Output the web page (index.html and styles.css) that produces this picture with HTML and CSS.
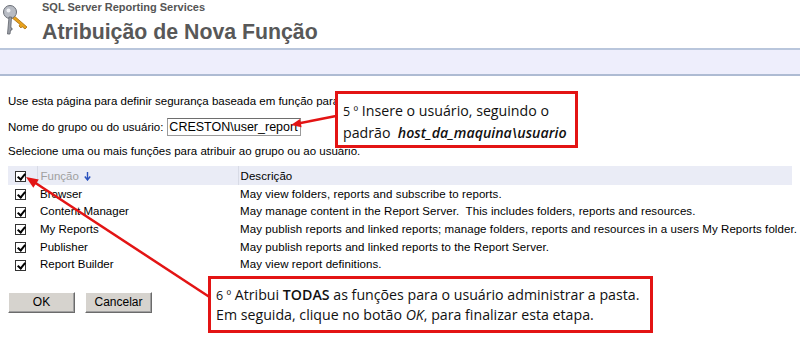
FILE: index.html
```html
<!DOCTYPE html>
<html lang="pt">
<head>
    <meta charset="UTF-8">
    <title>Atribuição de Nova Função</title>
    <link rel="stylesheet" href="styles.css">
</head>
<body>
    <div class="page">
        <div class="header">
            <svg class="logo" width="32" height="36" viewBox="0 0 32 36">
                <!-- gold key -->
                <path d="M12 13 L27 26 L25 28 L22 25.5 L21 27 L19 25 L20 23.5 L11 16 Z" fill="#e8a21c" stroke="#a86d10" stroke-width="0.8"/>
                <!-- grey key -->
                <circle cx="10" cy="11" r="6.5" fill="#b8bcc4" stroke="#6a6e76" stroke-width="1"/>
                <circle cx="8.5" cy="9.5" r="2" fill="#eef0f4"/>
                <path d="M9 16 L7.5 33 L10 33 L10.5 29 L12 29 L12 27 L10.8 27 L11.5 16 Z" fill="#9ca0a8" stroke="#5e626a" stroke-width="0.8"/>
            </svg>
            <div class="titles">
                <div class="product">SQL Server Reporting Services</div>
                <h1>Atribuição de Nova Função</h1>
            </div>
        </div>
        <div class="band"></div>

        <div class="content">
            <p class="intro">Use esta página para definir segurança baseada em função para</p>
            <div class="user-row">
                <label for="userName">Nome do grupo ou do usuário:</label>
                <input type="text" id="userName" value="CRESTON\user_report">
            </div>
            <p class="select-text">Selecione uma ou mais funções para atribuir ao grupo ou ao usuário.</p>

            <table class="roles">
                <colgroup>
                    <col class="w-check">
                    <col class="w-name">
                    <col>
                </colgroup>
                <thead>
                    <tr>
                        <th class="col-check"><span class="chk"></span></th>
                        <th class="col-name">Função
                            <svg class="sort" width="7" height="9" viewBox="0 0 7 9">
                                <path d="M3.5 0 V7 M0.8 4.5 L3.5 8 L6.2 4.5" fill="none" stroke="#2a52be" stroke-width="1.4"/>
                            </svg>
                        </th>
                        <th class="col-desc">Descrição</th>
                    </tr>
                </thead>
                <tbody>
                    <tr>
                        <td class="col-check"><span class="chk"></span></td>
                        <td>Browser</td>
                        <td class="col-desc">May view folders, reports and subscribe to reports.</td>
                    </tr>
                    <tr>
                        <td class="col-check"><span class="chk"></span></td>
                        <td>Content Manager</td>
                        <td class="col-desc">May manage content in the Report Server.&nbsp; This includes folders, reports and resources.</td>
                    </tr>
                    <tr>
                        <td class="col-check"><span class="chk"></span></td>
                        <td>My Reports</td>
                        <td class="col-desc">May publish reports and linked reports; manage folders, reports and resources in a users My Reports folder.</td>
                    </tr>
                    <tr>
                        <td class="col-check"><span class="chk"></span></td>
                        <td>Publisher</td>
                        <td class="col-desc">May publish reports and linked reports to the Report Server.</td>
                    </tr>
                    <tr>
                        <td class="col-check"><span class="chk"></span></td>
                        <td>Report Builder</td>
                        <td class="col-desc">May view report definitions.</td>
                    </tr>
                </tbody>
            </table>

            <div class="buttons">
                <button class="btn">OK</button>
                <button class="btn">Cancelar</button>
            </div>
        </div>

        <!-- annotations drawn over the screenshot -->
        <svg class="arrows" width="800" height="342" viewBox="0 0 800 342">
            <line x1="336" y1="116" x2="298" y2="123.6" stroke="#e31414" stroke-width="2.5"/>
            <polygon points="291,125 301.6,127.2 300,119" fill="#e31414"/>
            <line x1="211" y1="298" x2="34" y2="182" stroke="#e31414" stroke-width="2.5"/>
            <polygon points="26,177 38.8,179.4 33.3,187.8" fill="#e31414"/>
        </svg>
        <div class="callout callout-user">
            <span class="num">5 º</span> Insere o usuário, seguindo o<br>
            padrão&nbsp; <b><i>host_da_maquina\usuario</i></b>
        </div>
        <div class="callout callout-roles">
            <span class="num">6 º</span> Atribui <b>TODAS</b> as funções para o usuário administrar a pasta.<br>
            Em seguida, clique no botão <i>OK</i>, para finalizar esta etapa.
        </div>
    </div>
</body>
</html>
```

FILE: styles.css
```css
body {
    margin: 0;
    font-family: "Liberation Sans", Arial, sans-serif;
    font-size: 11.5px;
    color: #000;
    background: #fff;
}
.page {
    position: relative;
    width: 800px;
    height: 342px;
    overflow: hidden;
}
.header {
    display: flex;
    align-items: flex-start;
    height: 48px;
}
.logo {
    margin: 1px 10px 0 0;
}
.titles {
    padding-top: 1px;
}
.product {
    font-size: 11px;
    font-weight: bold;
    color: #555;
    line-height: 13px;
}
.titles h1 {
    margin: 5px 0 0;
    font-size: 21.3px;
    font-weight: bold;
    color: #585858;
    line-height: 26px;
}
.band {
    height: 24px;
    background: #eeeefc;
    border-top: 2px solid #b9c6dc;
    border-bottom: 2px solid #aebbd3;
}
.content {
    padding: 0 8px;
}
.intro {
    margin: 18px 0 0;
    line-height: 14px;
}
.user-row {
    display: flex;
    align-items: center;
    gap: 4px;
    margin-top: 10px;
}
.user-row input {
    box-sizing: border-box;
    width: 134px;
    height: 18px;
    padding: 0 1px;
    border: 1px solid #9a9a9a;
    border-top-color: #6e6e6e;
    font-family: "Liberation Sans", Arial, sans-serif;
    font-size: 12.5px;
    color: #000;
}
.select-text {
    margin: 8px 0 0;
    line-height: 14px;
}
.roles {
    width: 100%;
    margin-top: 8px;
    border-collapse: collapse;
    table-layout: fixed;
}
.w-check {
    width: 29px;
}
.w-name {
    width: 201px;
}
.roles th {
    height: 19px;
    padding: 0 0 0 3px;
    background: #eaecf6;
    font-weight: normal;
    text-align: left;
    border-left: 1px solid #d8dbe6;
}
.roles th.col-check {
    border-left: none;
}
.roles .col-name {
    color: #a0a0a0;
}
.sort {
    margin-left: 2px;
    vertical-align: -1px;
}
.roles td {
    height: 17.6px;
    padding: 0 0 0 3px;
    line-height: 14px;
    white-space: nowrap;
}
.roles .col-check {
    padding-left: 7px;
}
.roles .col-desc {
    padding-left: 2px;
    letter-spacing: 0.08px;
}
.chk {
    display: inline-block;
    position: relative;
    width: 11px;
    height: 11px;
    border: 1px solid #333;
    box-sizing: border-box;
    vertical-align: middle;
    background: #fff;
}
.chk::after {
    content: "";
    position: absolute;
    left: 3px;
    top: 0;
    width: 3px;
    height: 6px;
    border: solid #000;
    border-width: 0 2px 2px 0;
    transform: rotate(40deg);
}
.buttons {
    display: flex;
    gap: 10px;
    margin-top: 19px;
}
.btn {
    width: 67px;
    height: 21px;
    padding: 0;
    background: #d6d3ce;
    border: 1px solid;
    border-color: #fff #6b6b6b #6b6b6b #fff;
    box-shadow: inset -1px -1px 0 #a0a0a0;
    font-family: "Liberation Sans", Arial, sans-serif;
    font-size: 12px;
    color: #000;
}
.arrows {
    position: absolute;
    left: 0;
    top: 0;
    pointer-events: none;
}
.callout {
    position: absolute;
    box-sizing: border-box;
    background: #fff;
    border: 3px solid #e31414;
    font-family: "Open Sans", "Noto Sans", sans-serif;
    font-size: 14.2px;
    color: #111;
}
.callout .num {
    font-size: 12.5px;
}
.callout b {
    font-weight: 600;
}
.callout-user {
    left: 335px;
    top: 91px;
    width: 243px;
    height: 57px;
    padding: 6px 0 0 5px;
    line-height: 21px;
}
.callout-roles {
    left: 208px;
    top: 276px;
    width: 445px;
    height: 57px;
    padding: 6px 0 0 5px;
    line-height: 19px;
}
```
